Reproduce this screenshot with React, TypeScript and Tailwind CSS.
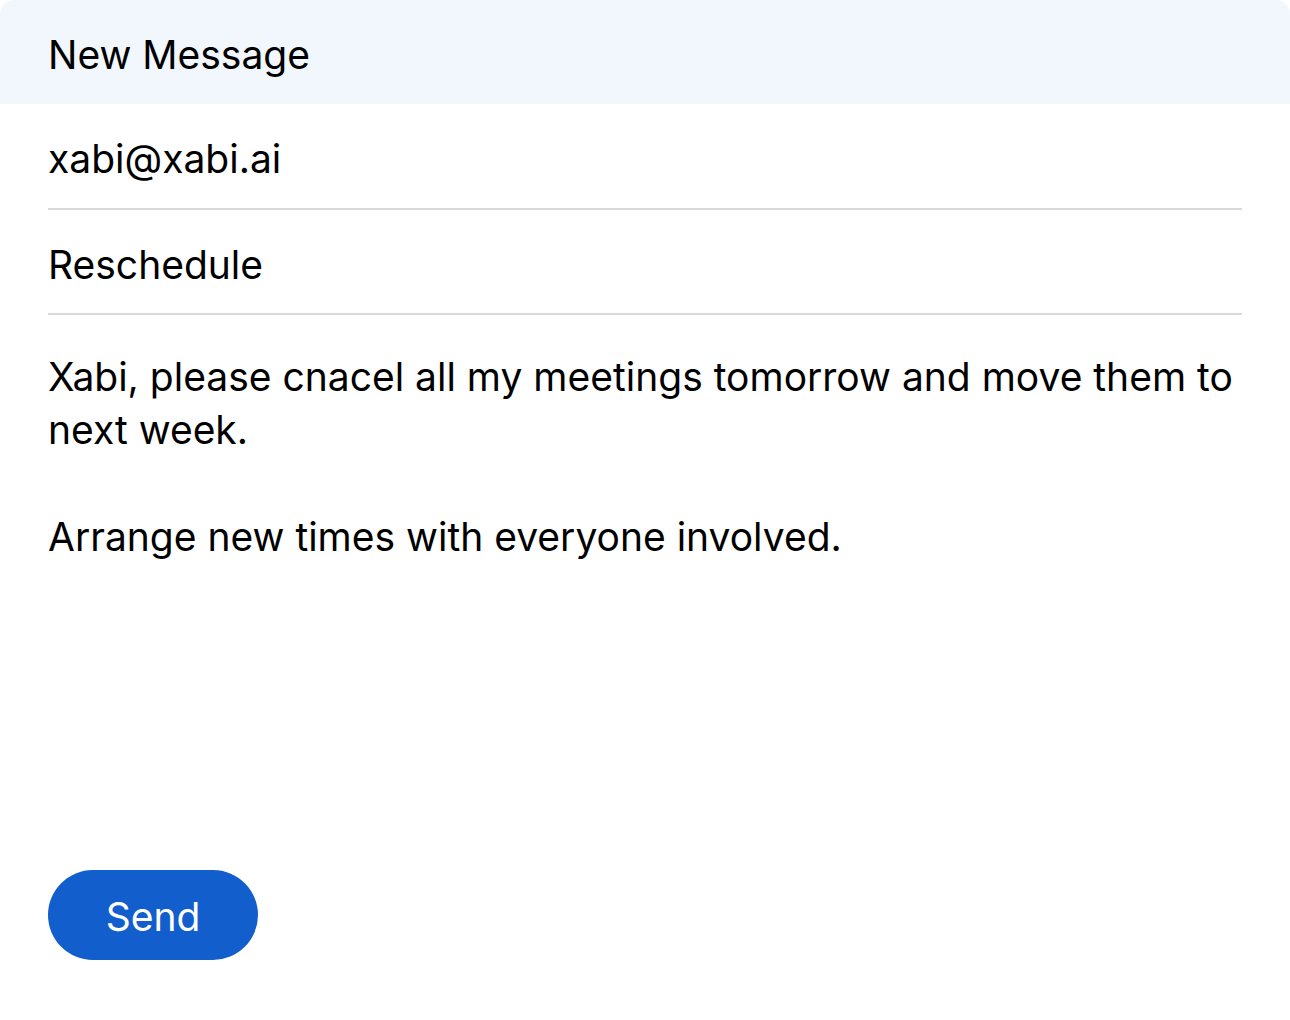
import React from 'react';

const App: React.FC = () => {
    return (
        <div className="w-[1290px] h-[1020px] bg-white text-black" style={{ fontFamily: 'Inter, "Liberation Sans", sans-serif' }}>
            <div className="h-[104px] bg-[#f2f6fd] rounded-t-[14px] flex items-center px-12">
                <span className="text-[39px] leading-none pt-[4px]">New Message</span>
            </div>
            <div className="mx-12">
                <div className="h-[106px] flex items-center border-b-2 border-[#d9d9d9]">
                    <span className="text-[39px] leading-none pt-[5px]">xabi@xabi.ai</span>
                </div>
                <div className="h-[105px] flex items-center border-b-2 border-[#d9d9d9]">
                    <span className="text-[39px] leading-none pt-[5px]">Reschedule</span>
                </div>
                <div className="pt-[35px] text-[39px] leading-[53px]">
                    <p>Xabi, please cnacel all my meetings tomorrow and move them to next week.</p>
                    <p className="mt-[54px]">Arrange new times with everyone involved.</p>
                </div>
                <button className="mt-[307px] w-[210px] h-[90px] rounded-full bg-[#115ecc] text-white text-[39px] leading-none pt-[2px]">
                    Send
                </button>
            </div>
        </div>
    );
};

export default App;
